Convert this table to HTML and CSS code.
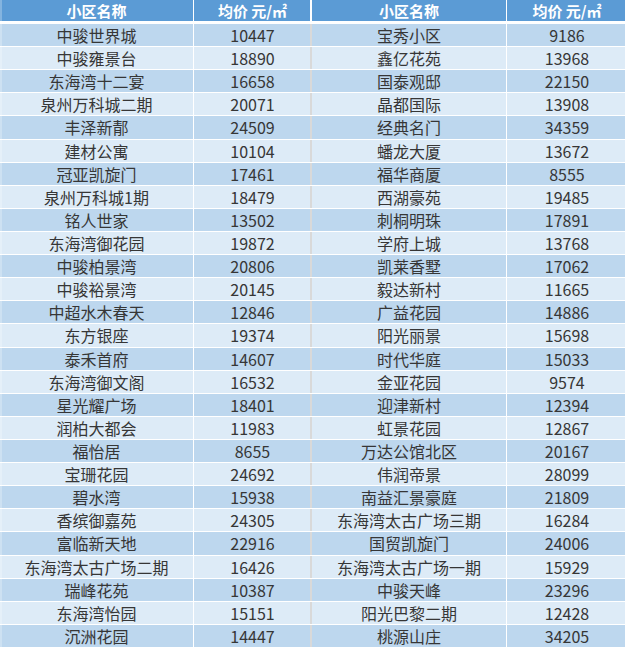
FILE: index.html
```html
<!DOCTYPE html>
<html lang="zh">
<head>
<meta charset="utf-8">
<title>小区均价</title>
<link rel="stylesheet" href="styles.css">
</head>
<body>
<div class="grid">
  <div class="c h c1">小区名称</div><div class="c h c2">均价 元/㎡</div><div class="c h c3">小区名称</div><div class="c h c4">均价 元/㎡</div>
  <div class="c o c1">中骏世界城</div><div class="c o c2">10447</div><div class="c o c3">宝秀小区</div><div class="c o c4">9186</div>
  <div class="c e c1">中骏雍景台</div><div class="c e c2">18890</div><div class="c e c3">鑫亿花苑</div><div class="c e c4">13968</div>
  <div class="c o c1">东海湾十二宴</div><div class="c o c2">16658</div><div class="c o c3">国泰观邸</div><div class="c o c4">22150</div>
  <div class="c e c1">泉州万科城二期</div><div class="c e c2">20071</div><div class="c e c3">晶都国际</div><div class="c e c4">13908</div>
  <div class="c o c1">丰泽新郬</div><div class="c o c2">24509</div><div class="c o c3">经典名门</div><div class="c o c4">34359</div>
  <div class="c e c1">建材公寓</div><div class="c e c2">10104</div><div class="c e c3">蟠龙大厦</div><div class="c e c4">13672</div>
  <div class="c o c1">冠亚凯旋门</div><div class="c o c2">17461</div><div class="c o c3">福华商厦</div><div class="c o c4">8555</div>
  <div class="c e c1">泉州万科城1期</div><div class="c e c2">18479</div><div class="c e c3">西湖豪苑</div><div class="c e c4">19485</div>
  <div class="c o c1">铭人世家</div><div class="c o c2">13502</div><div class="c o c3">刺桐明珠</div><div class="c o c4">17891</div>
  <div class="c e c1">东海湾御花园</div><div class="c e c2">19872</div><div class="c e c3">学府上城</div><div class="c e c4">13768</div>
  <div class="c o c1">中骏柏景湾</div><div class="c o c2">20806</div><div class="c o c3">凯莱香墅</div><div class="c o c4">17062</div>
  <div class="c e c1">中骏裕景湾</div><div class="c e c2">20145</div><div class="c e c3">毅达新村</div><div class="c e c4">11665</div>
  <div class="c o c1">中超水木春天</div><div class="c o c2">12846</div><div class="c o c3">广益花园</div><div class="c o c4">14886</div>
  <div class="c e c1">东方银座</div><div class="c e c2">19374</div><div class="c e c3">阳光丽景</div><div class="c e c4">15698</div>
  <div class="c o c1">泰禾首府</div><div class="c o c2">14607</div><div class="c o c3">时代华庭</div><div class="c o c4">15033</div>
  <div class="c e c1">东海湾御文阁</div><div class="c e c2">16532</div><div class="c e c3">金亚花园</div><div class="c e c4">9574</div>
  <div class="c o c1">星光耀广场</div><div class="c o c2">18401</div><div class="c o c3">迎津新村</div><div class="c o c4">12394</div>
  <div class="c e c1">润柏大都会</div><div class="c e c2">11983</div><div class="c e c3">虹景花园</div><div class="c e c4">12867</div>
  <div class="c o c1">福怡居</div><div class="c o c2">8655</div><div class="c o c3">万达公馆北区</div><div class="c o c4">20167</div>
  <div class="c e c1">宝珊花园</div><div class="c e c2">24692</div><div class="c e c3">伟润帝景</div><div class="c e c4">28099</div>
  <div class="c o c1">碧水湾</div><div class="c o c2">15938</div><div class="c o c3">南益汇景豪庭</div><div class="c o c4">21809</div>
  <div class="c e c1">香缤御嘉苑</div><div class="c e c2">24305</div><div class="c e c3">东海湾太古广场三期</div><div class="c e c4">16284</div>
  <div class="c o c1">富临新天地</div><div class="c o c2">22916</div><div class="c o c3">国贸凯旋门</div><div class="c o c4">24006</div>
  <div class="c e c1">东海湾太古广场二期</div><div class="c e c2">16426</div><div class="c e c3">东海湾太古广场一期</div><div class="c e c4">15929</div>
  <div class="c o c1">瑞峰花苑</div><div class="c o c2">10387</div><div class="c o c3">中骏天峰</div><div class="c o c4">23296</div>
  <div class="c e c1">东海湾怡园</div><div class="c e c2">15151</div><div class="c e c3">阳光巴黎二期</div><div class="c e c4">12428</div>
  <div class="c o c1">沉洲花园</div><div class="c o c2">14447</div><div class="c o c3">桃源山庄</div><div class="c o c4">34205</div>
</div>
</body>
</html>
```

FILE: styles.css
```css
html, body {
  margin: 0;
  padding: 0;
  background: #ffffff;
}

.grid {
  width: 625px;
  height: 647px;
  display: grid;
  grid-template-columns: 194px 118px 195px 118px;
  grid-template-rows: 23px repeat(27, 22.11px);
  row-gap: 1px;
  background: #ffffff;
  font-family: "Noto Sans CJK SC", "Microsoft YaHei", sans-serif;
  overflow: hidden;
}

.c {
  display: flex;
  align-items: center;
  justify-content: center;
  font-size: 16px;
  line-height: 1;
  color: #363636;
  white-space: nowrap;
  box-sizing: border-box;
}

.h {
  background: #5b9bd5;
  color: #ffffff;
  font-size: 15px;
  font-weight: bold;
  height: 21px;
  align-self: start;
}

.o { background: #bdd7ee; }
.e { background: #ddebf7; }

.c1 {
  border-right: 1px solid #ffffff;
  box-shadow: inset 2px 0 0 rgba(255, 255, 255, 0.25);
}
.c2 { border-right: 2px solid #d9d9d9; padding-left: 1px; }
.h.c2 { border-right-color: #ffffff; }
.c3 { border-right: 1px solid #ffffff; }
.c4 { padding-left: 2px; }
```
